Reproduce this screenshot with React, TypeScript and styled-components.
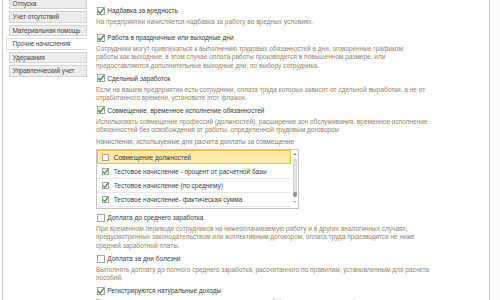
import React from 'react';
import styled, {createGlobalStyle} from 'styled-components';

const GlobalStyle = createGlobalStyle`
  html, body {
    margin: 0;
    padding: 0;
    background: #fff;
  }
  body {
    font-family: "Liberation Sans", Arial, sans-serif;
    font-size: 6.5px;
  }
`;

type Option = {
    label: string;
    checked: boolean;
    lines: string[];
    mb: number;
};

const tabs = [
    'Отпуска',
    'Учет отсутствий',
    'Материальная помощь',
    'Прочие начисления',
    'Удержания',
    'Управленческий учет',
];

const topOptions: Option[] = [
    {
        label: 'Надбавка за вредность',
        checked: true,
        lines: ['На предприятии начисляется надбавка за работу во вредных условиях.'],
        mb: 5.6,
    },
    {
        label: 'Работа в праздничные или выходные дни',
        checked: true,
        lines: [
            'Сотрудники могут привлекаться к выполнению трудовых обязанностей в дни, оговоренные графиком',
            'работы как выходные, в этом случае оплата работы производится в повышенном размере, или',
            'предоставляются дополнительные выходные дни, по выбору сотрудника.',
        ],
        mb: 3,
    },
    {
        label: 'Сдельный заработок',
        checked: true,
        lines: [
            'Если на вашем предприятии есть сотрудники, оплата труда которых зависит от сдельной выработки, а не от',
            'отработанного времени, установите этот флажок.',
        ],
        mb: 2,
    },
];

const bottomOptions: Option[] = [
    {
        label: 'Доплата до среднего заработка',
        checked: false,
        lines: [
            'При временном переводе сотрудников на нижеоплачиваемую работу и в других аналогичных случаях,',
            'предусмотренных законодательством или коллективным договором, оплата труда производится не ниже',
            'средней заработной платы.',
        ],
        mb: 3,
    },
    {
        label: 'Доплата за дни болезни',
        checked: false,
        lines: [
            'Выполнять доплату до полного среднего заработка, рассчитанного по правилам, установленным для расчета',
            'пособий.',
        ],
        mb: 2.5,
    },
    {
        label: 'Регистрируются натуральные доходы',
        checked: true,
        lines: ['Если сотрудникам предоставляются доходы в натуральной форме, установите этот флажок.'],
        mb: 0,
    },
];

const accruals = [
    {name: 'Совмещение должностей', checked: false},
    {name: 'Тестовое начисление - процент от расчетной базы', checked: true},
    {name: 'Тестовое начисление (по среднему)', checked: true},
    {name: 'Тестовое начисление- фактическая сумма', checked: true},
];

const Check = ({checked, size = 8}: { checked: boolean; size?: number }) => (
    <CheckBox $size={size}>
        {checked && (
            <svg width={size} height={size} viewBox="0 0 8 8">
                <path d="M1.2 4.1 L3.1 6.1 L6.9 1.4" stroke="#2f9d3d" strokeWidth="1.5" fill="none"/>
            </svg>
        )}
    </CheckBox>
);

const OptionBlock = ({option}: { option: Option }) => (
    <Item $mb={option.mb}>
        <CheckRow>
            <Check checked={option.checked}/>
            {option.label}
        </CheckRow>
        <Description>
            {option.lines.map((line) => (
                <Line key={line}>{line}</Line>
            ))}
        </Description>
    </Item>
);

const App = () => {
    return (
        <>
            <GlobalStyle/>
            <Page>
                <TabsPane>
                    <TabList>
                        {tabs.map((tab) => (
                            <Tab key={tab} $selected={tab === 'Прочие начисления'}>
                                {tab}
                            </Tab>
                        ))}
                    </TabList>
                </TabsPane>
                <Content>
                    {topOptions.map((option) => (
                        <OptionBlock key={option.label} option={option}/>
                    ))}
                    <Item $mb={3.2}>
                        <CheckRow>
                            <Check checked/>
                            Совмещение, временное исполнение обязанностей
                        </CheckRow>
                        <Description>
                            <Line>
                                Использовать совмещение профессий (должностей), расширение зон обслуживания, временное исполнение
                            </Line>
                            <Line>обязанностей без освобождения от работы, определенной трудовым договором</Line>
                        </Description>
                        <SubHeader>Начисления, используемые для расчета доплаты за совмещение</SubHeader>
                        <ListBox>
                            <Rows>
                                {accruals.map((row, i) => (
                                    <Row key={row.name} $active={i === 0}>
                                        <Check checked={row.checked} size={7}/>
                                        {row.name}
                                    </Row>
                                ))}
                            </Rows>
                            <ScrollBar>
                                <ArrowUp/>
                                <Track>
                                    <Thumb/>
                                </Track>
                                <ArrowDown/>
                            </ScrollBar>
                        </ListBox>
                    </Item>
                    {bottomOptions.map((option) => (
                        <OptionBlock key={option.label} option={option}/>
                    ))}
                </Content>
                <RightStrip/>
            </Page>
        </>
    );
};

export default App;

const Page = styled.div`
  display: flex;
  width: 500px;
  height: 300px;
  overflow: hidden;
  background: #fff;
`;

const TabsPane = styled.div`
  width: 81px;
  margin-left: 2px;
  padding: 0 0 0 3px;
  border-left: 1px solid #cacaca;
  flex-shrink: 0;
`;

const TabList = styled.div`
  margin-top: -2.5px;
`;

const Tab = styled.div<{ $selected?: boolean }>`
  display: flex;
  align-items: center;
  box-sizing: border-box;
  height: 11.5px;
  margin-bottom: 2px;
  margin-left: ${({$selected}) => ($selected ? 0 : 3)}px;
  padding-left: ${({$selected}) => ($selected ? 5.5 : 2.5)}px;
  background: ${({$selected}) => ($selected ? '#fff' : '#ececec')};
  border: 1px solid ${({$selected}) => ($selected ? '#dcdcdc' : '#d3d3d3')};
  border-right: ${({$selected}) => ($selected ? 'none' : '1px solid #cfcfcf')};
  color: #4a4a4a;
  letter-spacing: -0.12px;
  white-space: nowrap;
  overflow: hidden;
`;

const Content = styled.div`
  flex: 1;
  box-sizing: border-box;
  padding: 5.2px 0 0 9px;
  border-right: 1px solid #c6c6c6;
  overflow: hidden;
`;

const RightStrip = styled.div`
  width: 10px;
  flex-shrink: 0;
  background: #fbfbfb;
`;

const Item = styled.div<{ $mb: number }>`
  margin-bottom: ${({$mb}) => $mb}px;
`;

const CheckRow = styled.div`
  display: flex;
  align-items: center;
  height: 11px;
  color: #3a3a3a;
  white-space: nowrap;
`;

const CheckBox = styled.span<{ $size: number }>`
  display: inline-flex;
  box-sizing: border-box;
  width: ${({$size}) => $size}px;
  height: ${({$size}) => $size}px;
  margin-left: 0.7px;
  margin-right: ${({$size}) => ($size === 8 ? 2.6 : 5)}px;
  border: 1px solid #a3a3a3;
  background: #fff;
  flex-shrink: 0;
  overflow: visible;

  svg {
    margin: -1px;
    overflow: visible;
  }
`;

const Description = styled.div`
  margin-top: 2px;
  color: #968366;
  line-height: 8.3px;
`;

const Line = styled.div`
  white-space: nowrap;
`;

const SubHeader = styled.div`
  margin-top: 3.5px;
  line-height: 8.3px;
  color: #7e7e7e;
  white-space: nowrap;
`;

const ListBox = styled.div`
  display: flex;
  box-sizing: border-box;
  width: 203px;
  height: 60px;
  margin-top: 3px;
  border: 1px solid #c4c4c4;
  background: #fff;
`;

const Rows = styled.div`
  flex: 1;
  overflow: hidden;
`;

const Row = styled.div<{ $active?: boolean }>`
  display: flex;
  align-items: center;
  box-sizing: border-box;
  height: 14.3px;
  padding-left: 3px;
  color: #3d3d3d;
  white-space: nowrap;
  background: ${({$active}) => ($active ? '#fce9a8' : '#fff')};
  border: 1px solid ${({$active}) => ($active ? '#f0c23f' : 'transparent')};
  border-bottom: 1px solid ${({$active}) => ($active ? '#f0c23f' : '#e6e6e6')};
`;

const ScrollBar = styled.div`
  width: 7px;
  display: flex;
  flex-direction: column;
  align-items: center;
  padding-top: 3px;
  box-sizing: border-box;
`;

const ArrowUp = styled.div`
  width: 0;
  height: 0;
  border-left: 2px solid transparent;
  border-right: 2px solid transparent;
  border-bottom: 2.5px solid #8a8a8a;
  margin-bottom: 4.5px;
`;

const ArrowDown = styled.div`
  width: 0;
  height: 0;
  border-left: 2px solid transparent;
  border-right: 2px solid transparent;
  border-top: 2.5px solid #b5b5b5;
  margin-top: 3.5px;
`;

const Track = styled.div`
  width: 4px;
  height: 38px;
  box-sizing: border-box;
  border: 1px solid #d6d6d6;
  border-radius: 2px;
  background: #e4e4e4;
  display: flex;
  flex-direction: column;
  justify-content: flex-end;
`;

const Thumb = styled.div`
  height: 5px;
  margin: 0 -1px -1px;
  border-radius: 2px;
  background: #8f8f8f;
`;
